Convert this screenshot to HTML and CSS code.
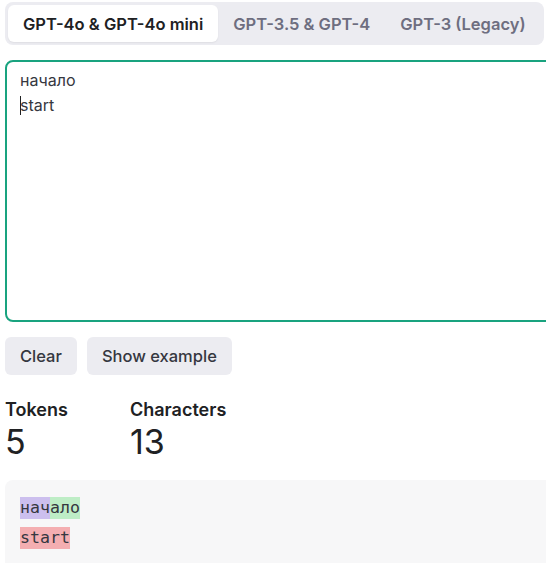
FILE: index.html
```html
<!DOCTYPE html>
<html lang="en">
<head>
<meta charset="utf-8">
<title>Tokenizer</title>
<link rel="stylesheet" href="styles.css">
</head>
<body>
<main class="page">
  <nav class="tabs">
    <button class="tab tab-active">GPT-4o &amp; GPT-4o mini</button>
    <button class="tab">GPT-3.5 &amp; GPT-4</button>
    <button class="tab">GPT-3 (Legacy)</button>
  </nav>

  <div class="editor">
    <div class="editor-line">начало</div>
    <div class="editor-line"><span class="caret"></span>start</div>
  </div>

  <div class="actions">
    <button class="btn">Clear</button>
    <button class="btn">Show example</button>
  </div>

  <div class="stats">
    <div class="stat stat-tokens">
      <div class="stat-label">Tokens</div>
      <div class="stat-value">5</div>
    </div>
    <div class="stat">
      <div class="stat-label">Characters</div>
      <div class="stat-value">13</div>
    </div>
  </div>

  <div class="output">
    <div class="out-line"><span class="tok tok-purple">нач</span><span class="tok tok-green">ало</span></div>
    <div class="out-line"><span class="tok tok-red">start</span></div>
  </div>
</main>
</body>
</html>
```

FILE: styles.css
```css
*, *::before, *::after {
  box-sizing: border-box;
}

html, body {
  margin: 0;
  padding: 0;
  overflow: hidden;
  background: #ffffff;
}

body {
  font-family: Inter, "Noto Sans", "Liberation Sans", sans-serif;
  color: #353740;
}

.page {
  width: 620px;
  padding: 2px 0 0 5px;
}

.tabs {
  display: inline-flex;
  background: #ececf1;
  border-radius: 8px;
  padding: 3px;
}

.tab {
  font-family: inherit;
  font-size: 16.5px;
  font-weight: 600;
  color: #6e6e80;
  background: transparent;
  border: none;
  border-radius: 6px;
  height: 37px;
  padding: 0 15px;
  cursor: pointer;
}

.tab-active {
  background: #ffffff;
  color: #202123;
  box-shadow: 0 1px 2px rgba(0, 0, 0, 0.06);
}

.editor {
  margin-top: 15px;
  height: 262px;
  border: 2px solid #19a37f;
  border-radius: 8px;
  padding: 6px 13px;
  font-size: 16px;
  line-height: 25px;
  color: #353740;
}

.caret {
  display: inline-block;
  width: 1px;
  height: 19px;
  background: #202123;
  vertical-align: -4px;
  margin-right: -1px;
}

.actions {
  display: flex;
  gap: 10px;
  margin-top: 15px;
}

.btn {
  font-family: inherit;
  font-size: 16.5px;
  font-weight: 500;
  color: #353740;
  background: #ececf1;
  border: none;
  border-radius: 6px;
  height: 38px;
  padding: 0 15px;
}

.stats {
  display: flex;
  margin-top: 23px;
}

.stat-tokens {
  width: 125px;
}

.stat-label {
  font-size: 18px;
  font-weight: 600;
  line-height: 24px;
  color: #202123;
}

.stat-value {
  font-size: 34px;
  font-weight: 400;
  line-height: 40px;
  color: #202123;
}

.output {
  margin-top: 18px;
  background: #f7f7f8;
  border-radius: 8px 0 0 0;
  padding: 13px 15px 20px;
  font-family: "DejaVu Sans Mono", "Liberation Mono", monospace;
  font-size: 16.6px;
  line-height: 30px;
  color: #353740;
  min-height: 90px;
}

.tok {
  padding: 1px 0 2px;
}

.tok-purple { background: rgba(107, 64, 216, 0.3); }
.tok-green { background: rgba(104, 222, 122, 0.4); }
.tok-red { background: rgba(239, 65, 70, 0.4); }
```
